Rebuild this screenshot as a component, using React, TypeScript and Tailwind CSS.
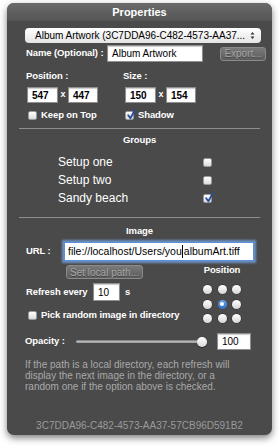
import { useState } from 'react';

const font = "font-['Liberation_Sans',Arial,sans-serif]";

function CheckBox({ checked }: { checked?: boolean }) {
  return (
    <span className="relative inline-block h-[9px] w-[9px] shrink-0 rounded-[2px] border border-[#9a9a9a] bg-linear-to-b from-white to-[#dcdcdc]">
      {checked && (
        <svg className="absolute left-[1px] top-[-3px]" width="9" height="11" viewBox="0 0 9 11">
          <path d="M1.2 6.2 L3.4 9.2 L7.8 1.2" fill="none" stroke="#244f9e" strokeWidth="1.8" strokeLinecap="round" strokeLinejoin="round" />
        </svg>
      )}
    </span>
  );
}

function Radio({ on }: { on?: boolean }) {
  return on ? (
    <span className="flex h-[9px] w-[9px] items-center justify-center rounded-full bg-linear-to-b from-[#6aa0e6] to-[#2f6cc8]">
      <span className="h-[4px] w-[4px] rounded-full bg-white" />
    </span>
  ) : (
    <span className="h-[9px] w-[9px] rounded-full bg-linear-to-b from-white to-[#d6d6d6] shadow-[0_0_0_0.5px_rgba(0,0,0,0.4)]" />
  );
}

function Field({ value, className }: { value: string; className: string }) {
  return (
    <div className={`flex items-center border border-[#8f8f8f] bg-white pl-[4px] text-[10px] text-black shadow-[inset_0_1px_1px_rgba(0,0,0,0.2)] ${className}`}>
      {value}
    </div>
  );
}

const label = 'text-[9.5px] font-bold text-white tracking-[-0.1px]';
const dimButton =
  'flex items-center justify-center rounded-[3px] border border-[#8a8a8a] bg-linear-to-b from-[#7a7a7a] to-[#5c5c5c] text-[10px] text-[#a6a6a6] [text-shadow:0_1px_0_rgba(0,0,0,0.35)]';

export default function App() {
  const [opacity] = useState(100);
  const groups = [
    { name: 'Setup one', on: false },
    { name: 'Setup two', on: false },
    { name: 'Sandy beach', on: true },
  ];

  return (
    <div className={`h-[446px] w-[279px] bg-white pl-[7px] pt-[3px] ${font}`}>
      <div className="flex h-[432px] w-[265px] flex-col overflow-hidden rounded-[7px] bg-[#4a4a4a] shadow-[0_3px_7px_rgba(0,0,0,0.5)]">
        <div className="flex h-[18px] shrink-0 items-center justify-center bg-linear-to-b from-[#6a6a6a] to-[#555555] text-[11px] font-bold text-white">
          Properties
        </div>

        <div className="ml-[18px] mt-[7px] flex h-[15px] w-[236px] items-center justify-between rounded-[4px] bg-linear-to-b from-white to-[#e4e4e4] pl-[10px] pr-[6px] text-[10px] text-black">
          <span>Album Artwork (3C7DDA96-C482-4573-AA37...</span>
          <svg width="5" height="9" viewBox="0 0 5 9">
            <path d="M0.5 3.5 L2.5 1 L4.5 3.5 Z M0.5 5.5 L2.5 8 L4.5 5.5 Z" fill="#333" />
          </svg>
        </div>

        <div className="mt-[2px] flex h-[17px] items-center">
          <span className={`ml-[19px] w-[81px] ${label}`}>Name (Optional) :</span>
          <Field value="Album Artwork" className="h-[17px] w-[96px]" />
          <div className={`ml-[17px] h-[14px] w-[46px] ${dimButton}`}>Export...</div>
        </div>

        <div className="mt-[9px] flex h-[10px] items-center">
          <span className={`ml-[19px] w-[97px] ${label}`}>Position :</span>
          <span className={label}>Size :</span>
        </div>

        <div className="mt-[6px] flex h-[16px] items-center text-[9px] font-bold text-white">
          <Field value="547" className="ml-[20px] h-[16px] w-[31px]" />
          <span className="w-[10px] text-center">x</span>
          <Field value="447" className="h-[16px] w-[30px]" />
          <Field value="150" className="ml-[27px] h-[16px] w-[31px]" />
          <span className="w-[10px] text-center">x</span>
          <Field value="154" className="h-[16px] w-[30px]" />
        </div>

        <div className="mt-[7px] flex h-[10px] items-center">
          <div className="ml-[21px] flex w-[97px] items-center gap-[4px]">
            <CheckBox />
            <span className={label}>Keep on Top</span>
          </div>
          <div className="flex items-center gap-[4px]">
            <CheckBox checked />
            <span className={label}>Shadow</span>
          </div>
        </div>

        <div className="ml-[12px] mt-[8px] h-px w-[241px] bg-[#8e8e8e]" />

        <div className={`mt-[5px] h-[12px] text-center leading-[12px] ${label}`}>Groups</div>

        <div className="mt-[7px] flex flex-col">
          {groups.map((g) => (
            <div key={g.name} className="flex h-[18px] items-center">
              <span className="ml-[51px] w-[145px] text-[12px] text-white">{g.name}</span>
              <CheckBox checked={g.on} />
            </div>
          ))}
        </div>

        <div className="ml-[12px] mt-[10px] h-px w-[241px] bg-[#8e8e8e]" />

        <div className={`mt-[7px] h-[12px] text-center leading-[12px] ${label}`}>Image</div>

        <div className="mt-[6px] flex h-[17px] items-center">
          <span className={`ml-[19px] w-[39px] ${label}`}>URL :</span>
          <div className="flex h-[17px] w-[188px] items-center bg-white pl-[3px] text-[10.5px] text-black shadow-[0_0_0_1px_#5b8fd6,0_0_2px_3px_rgba(120,170,235,0.75)]">
            file://localhost/Users/you
            <span className="mx-[0.5px] h-[13px] w-px bg-black" />
            albumArt.tiff
          </div>
        </div>

        <div className="flex">
          <div className="flex flex-1 flex-col">
            <div className={`ml-[59px] mt-[5px] h-[14px] w-[77px] ${dimButton}`}>Set local path...</div>
            <div className="mt-[4px] flex h-[18px] items-center">
              <span className={`ml-[19px] w-[67px] ${label}`}>Refresh every</span>
              <Field value="10" className="h-[18px] w-[27px]" />
              <span className={`ml-[5px] ${label}`}>s</span>
            </div>
            <div className="ml-[21px] mt-[8px] flex h-[12px] items-center gap-[4px]">
              <CheckBox />
              <span className={label}>Pick random image in directory</span>
            </div>
          </div>
          <div className="mr-[25px] flex w-[50px] flex-col items-center">
            <span className={`mt-[4px] h-[12px] leading-[12px] ${label}`}>Position</span>
            <div className="mt-[9px] grid grid-cols-3 gap-x-[5.5px] gap-y-[5.5px]">
              {[0, 1, 2, 3, 4, 5, 6, 7, 8].map((i) => (
                <Radio key={i} on={i === 4} />
              ))}
            </div>
          </div>
        </div>

        <div className="mt-[10px] flex h-[17px] items-center">
          <span className={`ml-[18px] w-[51px] ${label}`}>Opacity :</span>
          <div className="relative flex h-[10px] w-[131px] items-center">
            <div className="h-[3px] w-full rounded-full bg-linear-to-b from-[#cfcfcf] to-[#9a9a9a] shadow-[inset_0_1px_0_rgba(0,0,0,0.3)]" />
            <span className="absolute right-0 top-0 h-[10px] w-[10px] rounded-full bg-linear-to-b from-white to-[#d9d9d9] shadow-[0_1px_1px_rgba(0,0,0,0.4)]" />
          </div>
          <Field value={String(opacity)} className="ml-[10px] h-[17px] w-[34px]" />
        </div>

        <p className="ml-[18px] mt-[9px] text-[10px] leading-[11px] text-[#a9a9a9]">
          If the path is a local directory, each refresh will
          <br />
          display the next image in the directory, or a
          <br />
          random one if the option above is checked.
        </p>

        <div className="mt-[28px] h-[12px] text-center text-[10px] leading-[12px] text-[#9a9a9a]">
          3C7DDA96-C482-4573-AA37-57CB96D591B2
        </div>
      </div>
    </div>
  );
}
